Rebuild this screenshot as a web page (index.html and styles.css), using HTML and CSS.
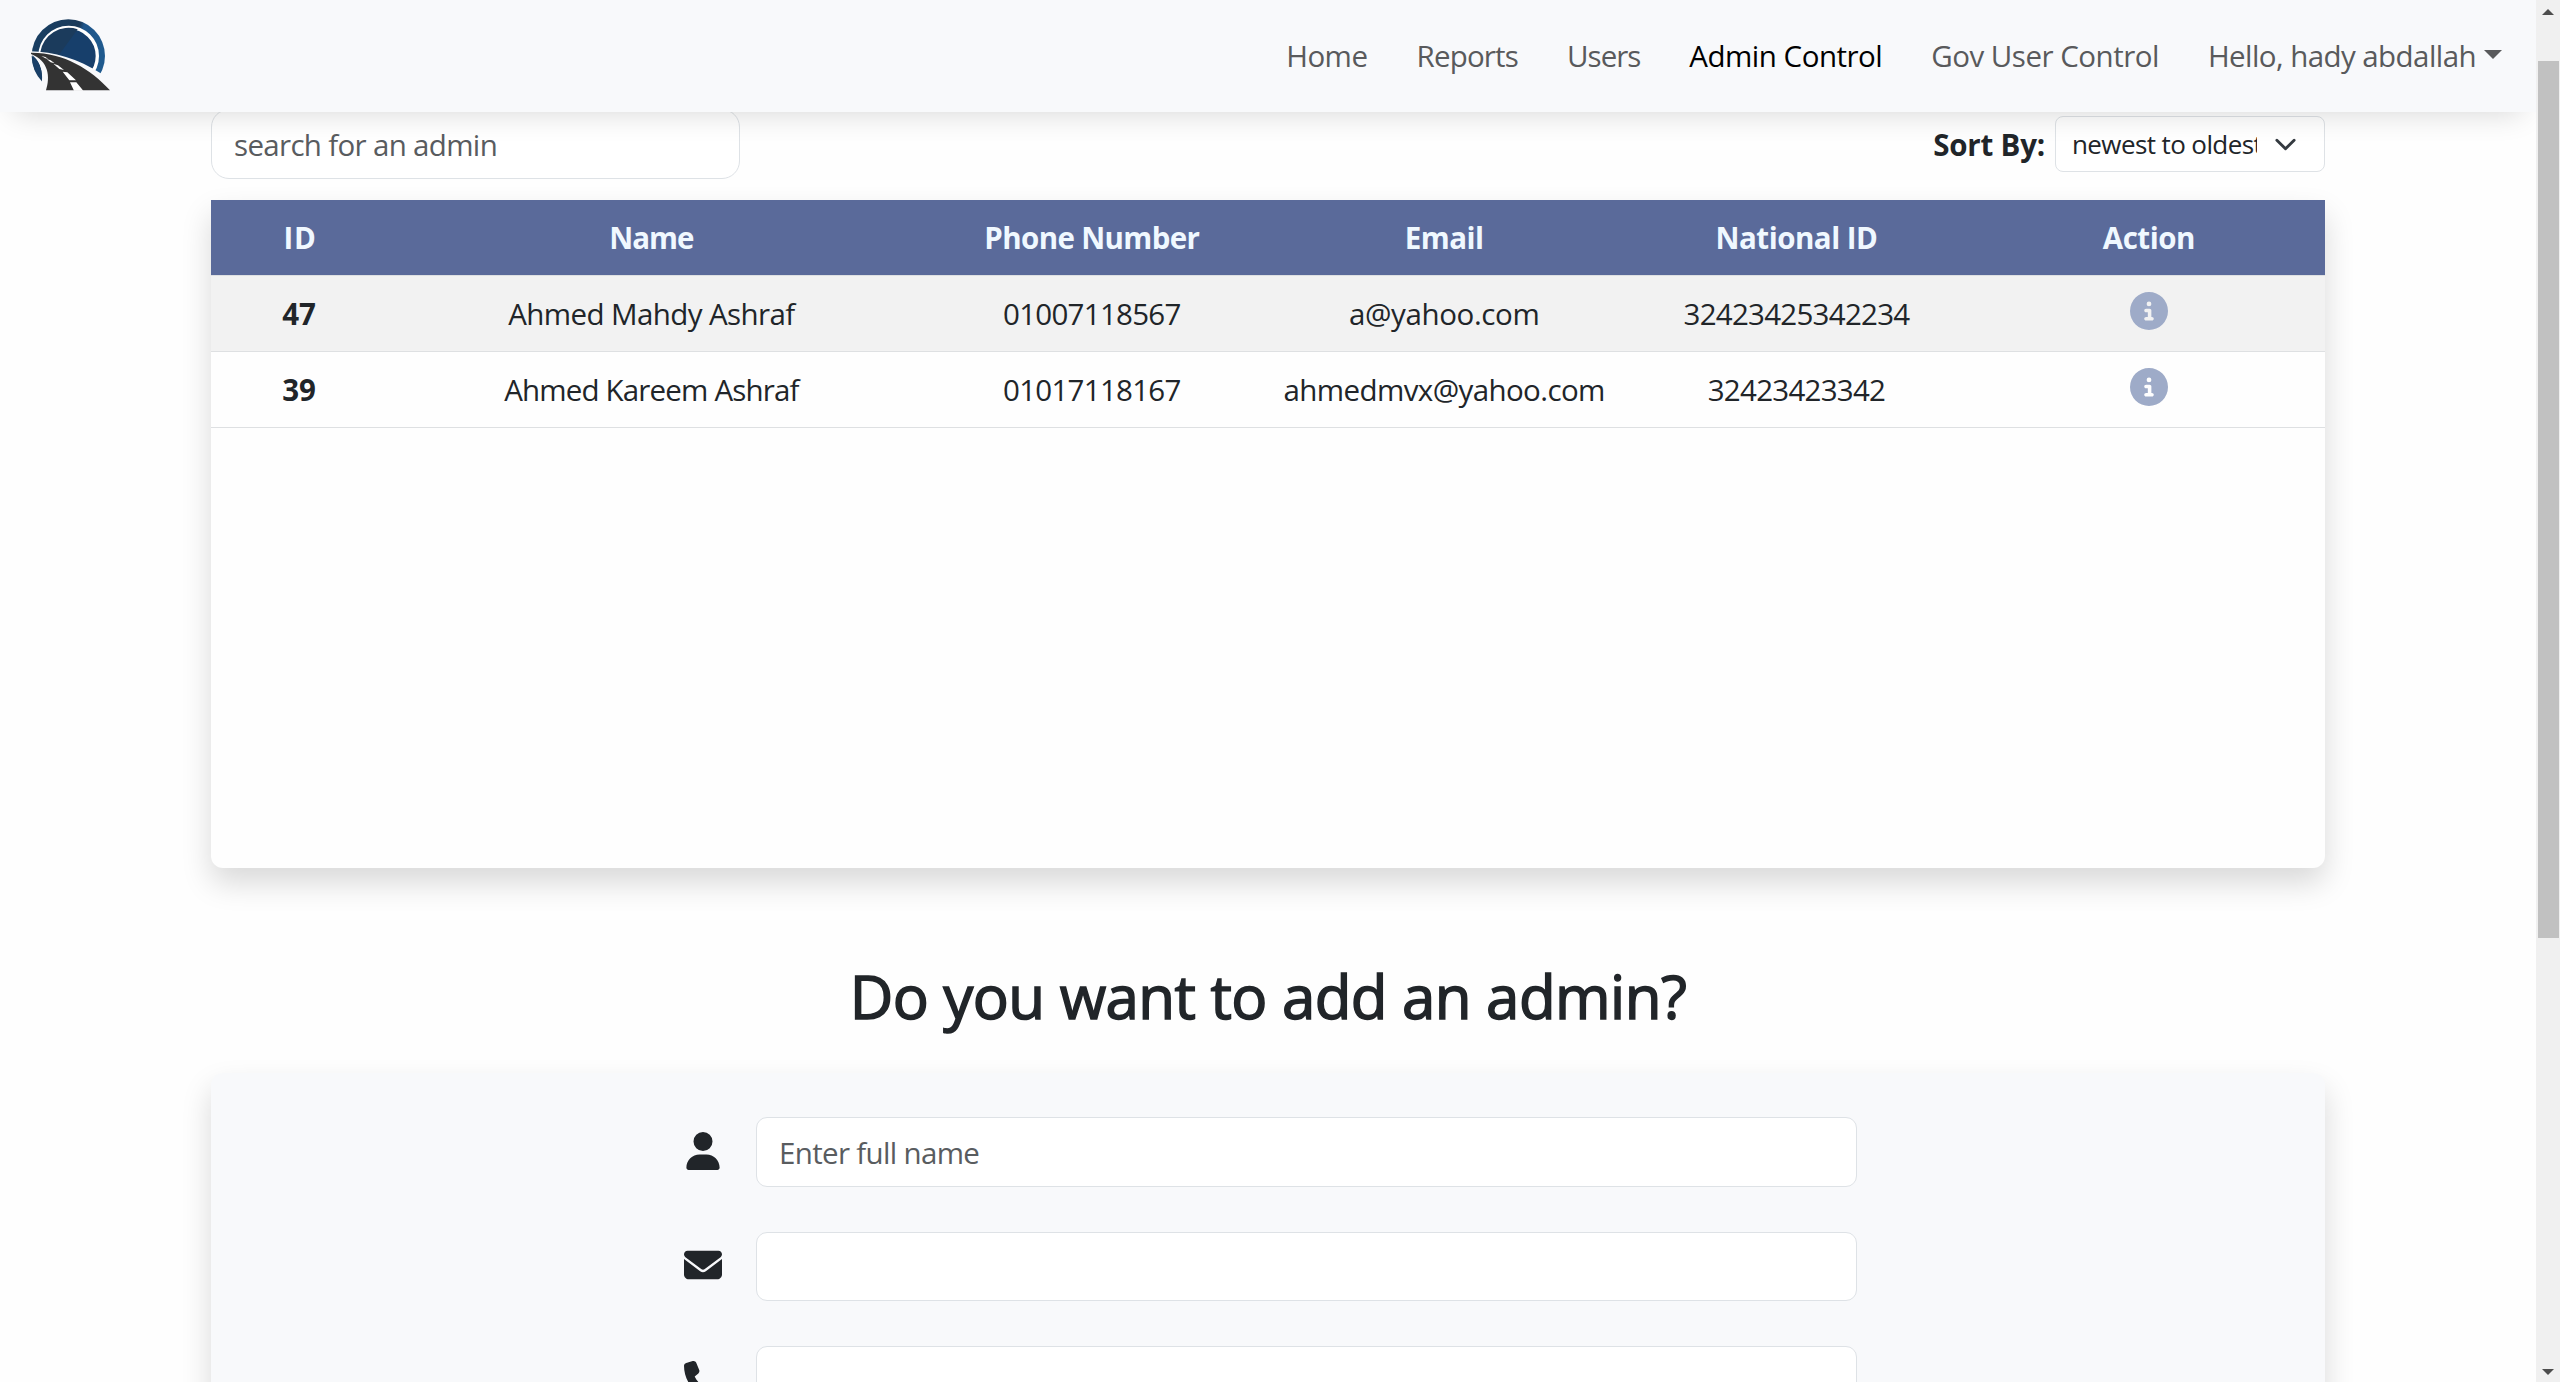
FILE: index.html
```html
<!DOCTYPE html>
<html lang="en">
<head>
<meta charset="utf-8">
<title>Admin Control</title>
<link rel="stylesheet" href="styles.css">
</head>
<body>
<div class="window">
  <div class="page">
    <header class="navbar">
      <a class="brand" href="#" aria-label="Home">
        <svg class="logo" viewBox="90 50 246 225">
          <defs>
            <linearGradient id="rim" x1="0" y1="0" x2="1" y2="0.3">
              <stop offset="0" stop-color="#183f63"/><stop offset="0.62" stop-color="#1a3a5a"/>
              <stop offset="0.68" stop-color="#1f568b"/><stop offset="1" stop-color="#1f5a8e"/>
            </linearGradient>
          </defs>
          <circle cx="205" cy="167" r="110" fill="url(#rim)"/>
          <circle cx="206" cy="167" r="86" fill="#173f6b" stroke="#fff" stroke-width="10"/>
          <path d="M121 155a86 86 0 0 1 112-68l-63 86-49-18z" fill="#1b3b5c"/>
          <path d="M88 153C160 153 235 176 302 219L345 252V285H126V238C128 205 118 178 88 163z" fill="#f8f9fb"/>
          <path d="M97 165C116 180 127 205 125 237C107 220 96 196 97 165z" fill="#1a4068"/>
          <path d="M93 157C190 156 272 206 330 270H138C151 230 147 182 93 161z" fill="#333333"/>
          <path d="M124 167l12 3 9 6-9-2zM140 176l12 4 12 9-12-3zM160 190l14 5 18 14-14-3zM188 214l14 2 26 24h-20zM210 246h19l21 25h-28z" fill="#fff"/>
        </svg>
      </a>
      <nav class="links">
        <a class="link t-home" href="#">Home</a>
        <a class="link t-reports" href="#">Reports</a>
        <a class="link t-users" href="#">Users</a>
        <a class="link active" href="#">Admin Control</a>
        <a class="link" href="#">Gov User Control</a>
        <a class="link t-hello" href="#">Hello, hady abdallah<span class="caret"></span></a>
      </nav>
    </header>

    <main class="content">
      <div class="toolbar">
        <input class="field search" type="text" placeholder="search for an admin">
        <div class="sort">
          <span class="sort-label">Sort By:</span>
          <div class="select">
            <span class="select-value">newest to oldest</span>
            <svg class="chevron" viewBox="0 0 16 16"><path d="m2 5 6 6 6-6" fill="none" stroke="#343a40" stroke-width="2" stroke-linecap="round" stroke-linejoin="round"/></svg>
          </div>
        </div>
      </div>

      <section class="card table">
        <div class="row head">
          <span class="t-id">ID</span><span class="t-name">Name</span><span class="t-phone">Phone Number</span><span>Email</span><span>National ID</span><span>Action</span>
        </div>
        <div class="row striped">
          <b>47</b><span class="t-full">Ahmed Mahdy Ashraf</span><span class="t-num">01007118567</span><span class="t-mail">a@yahoo.com</span><span class="t-num">32423425342234</span>
          <span class="action"><svg class="info" viewBox="0 0 512 512"><path d="M256 512A256 256 0 1 0 256 0a256 256 0 1 0 0 512zM216 336h24V272H216c-13.300 0-24-10.700-24-24s10.700-24 24-24h48c13.300 0 24 10.700 24 24v88h8c13.300 0 24 10.700 24 24s-10.700 24-24 24H216c-13.300 0-24-10.700-24-24s10.700-24 24-24zm40-208a32 32 0 1 1 0 64 32 32 0 1 1 0-64z"/></svg></span>
        </div>
        <div class="row">
          <b>39</b><span class="t-full2">Ahmed Kareem Ashraf</span><span class="t-num">01017118167</span><span class="t-full">ahmedmvx@yahoo.com</span><span class="t-num">32423423342</span>
          <span class="action"><svg class="info" viewBox="0 0 512 512"><path d="M256 512A256 256 0 1 0 256 0a256 256 0 1 0 0 512zM216 336h24V272H216c-13.300 0-24-10.700-24-24s10.700-24 24-24h48c13.300 0 24 10.700 24 24v88h8c13.300 0 24 10.700 24 24s-10.700 24-24 24H216c-13.300 0-24-10.700-24-24s10.700-24 24-24zm40-208a32 32 0 1 1 0 64 32 32 0 1 1 0-64z"/></svg></span>
        </div>
      </section>

      <h1 class="title">Do you want to add an admin?</h1>

      <form class="card form">
        <div class="form-row">
          <svg class="form-icon person" viewBox="0 0 448 512"><path d="M224 256A128 128 0 1 0 224 0a128 128 0 1 0 0 256zm-45.700 48C79.800 304 0 383.800 0 482.300C0 498.700 13.300 512 29.700 512H418.300c16.400 0 29.700-13.300 29.700-29.700C448 383.800 368.200 304 269.700 304H178.300z"/></svg>
          <input class="field" type="text" placeholder="Enter full name">
        </div>
        <div class="form-row short">
          <svg class="form-icon" viewBox="0 0 512 512"><path d="M48 64C21.500 64 0 85.500 0 112c0 15.100 7.100 29.300 19.200 38.400L236.800 313.600c11.400 8.500 27 8.500 38.400 0L492.800 150.400c12.100-9.100 19.200-23.300 19.200-38.400c0-26.500-21.500-48-48-48H48zM0 176V384c0 35.300 28.700 64 64 64H448c35.300 0 64-28.700 64-64V176L294.400 339.200c-22.800 17.100-54 17.100-76.800 0L0 176z"/></svg>
          <input class="field" type="text">
        </div>
        <div class="form-row">
          <svg class="form-icon" viewBox="0 0 512 512"><path d="M164.900 24.600c-7.700-18.600-28-28.500-47.400-23.200l-88 24C12.100 30.200 0 46 0 64C0 311.400 200.600 512 448 512c18 0 33.800-12.100 38.600-29.500l24-88c5.300-19.400-4.600-39.700-23.200-47.400l-96-40c-16.300-6.800-35.200-2.100-46.300 11.600L304.700 368C234.300 334.700 177.300 277.700 144 207.300L193.300 167c13.700-11.200 18.400-30 11.600-46.300l-40-96z"/></svg>
          <input class="field" type="text">
        </div>
      </form>
    </main>
  </div>
  <div class="scrollbar">
    <svg class="arrow" viewBox="0 0 12 6"><path d="M6 0l6 6H0z"/></svg>
    <div class="track"><div class="thumb"></div></div>
    <svg class="arrow" viewBox="0 0 12 6"><path d="M0 0h12L6 6z"/></svg>
  </div>
</div>
</body>
</html>
```
FILE: styles.css
```css
* { box-sizing: border-box; }

body {
  margin: 0;
  background: #fefefe;
  color: #212529;
  font: 400 29.5px/45px "Open Sans", "Noto Sans", sans-serif;
}

.window {
  display: grid;
  grid-template-columns: 1fr 24px;
  height: 1382px;
  overflow: hidden;
}

.page {
  height: 1382px;
  overflow: hidden;
}

/* Navigation */
.navbar {
  position: relative;
  z-index: 2;
  display: flex;
  align-items: center;
  justify-content: space-between;
  height: 112px;
  padding: 0 34px 2px 30px;
  background: #f8f9fb;
  box-shadow: 0 15px 30px -14px rgba(0, 0, 0, 0.16);
}

.brand { display: flex; padding-bottom: 1px; }
.logo { width: 82px; height: 75px; }

.links {
  display: flex;
  gap: 49px;
}

.link {
  color: #595a5c;
  text-decoration: none;
  letter-spacing: -0.5px;
  white-space: nowrap;
}

.link.active { color: #000; }
.t-reports { letter-spacing: -0.8px; }
.t-users { letter-spacing: -1px; }
.t-hello { letter-spacing: -0.57px; }

.caret {
  display: inline-block;
  margin-left: 8px;
  vertical-align: 8px;
  border: 9px solid transparent;
  border-top-color: #595a5c;
  border-bottom: 0;
}

/* Content */
.content {
  width: 2114px;
  margin: -3px 0 0 211px;
}

.toolbar {
  display: flex;
  justify-content: space-between;
  height: 91px;
}

.field {
  flex: 1;
  height: 100%;
  padding: 0 22px;
  border: 1px solid #dee2e6;
  border-radius: 11px;
  background: #fff;
  color: #212529;
  font: inherit;
  letter-spacing: -0.67px;
  outline: none;
}

.field::placeholder { color: #595c5f; opacity: 1; }

.search {
  flex: none;
  width: 529px;
  height: 70px;
  border-radius: 18px;
}

.sort {
  display: flex;
  align-items: center;
  gap: 10px;
  height: 70px;
}

.sort-label { font-weight: 700; letter-spacing: -0.2px; }

.select {
  display: flex;
  align-items: center;
  justify-content: space-between;
  width: 270px;
  height: 56px;
  padding: 0 27px 0 16px;
  border: 1px solid #dee2e6;
  border-radius: 8px;
  background: #fff;
  font-size: 26px;
  letter-spacing: -0.6px;
}

.select-value {
  width: 185px;
  overflow: hidden;
  white-space: nowrap;
}

.chevron { width: 23px; height: 23px; }

.card {
  border-radius: 12px;
  box-shadow: 0 15px 30px rgba(0, 0, 0, 0.15);
}

/* Table */
.table {
  height: 668px;
  border-radius: 0 0 12px 12px;
  background: #fefefe;
}

.row {
  display: grid;
  grid-template-columns: 1fr 3fr 2fr 2fr 2fr 2fr;
  align-items: center;
  height: 76px;
  border-bottom: 1px solid #dee0e2;
  text-align: center;
}

.head {
  background: #5a6a9a;
  background-clip: padding-box;
  color: #f0f8ff;
  font-weight: 700;
  letter-spacing: -0.5px;
}

.striped { background: #f2f2f2; }
.t-id { padding-left: 2px; letter-spacing: 0.8px; }
.t-name { letter-spacing: -1px; }
.t-phone { letter-spacing: -0.63px; }
.t-full { letter-spacing: -0.6px; }
.t-full2 { letter-spacing: -0.82px; }
.t-num { letter-spacing: -0.73px; }
.t-mail { letter-spacing: -0.38px; }

.action { display: flex; justify-content: center; }

.info {
  width: 38px;
  height: 38px;
  margin-bottom: 6px;
  fill: #9eabc8;
}

/* Add admin */
.title {
  margin: 92px 0 41px;
  font-size: 60px;
  font-weight: 400;
  line-height: 72px;
  letter-spacing: -0.55px;
  text-align: center;
  -webkit-text-stroke: 1.5px #212529;
}

.form {
  display: flex;
  flex-direction: column;
  gap: 45px;
  height: 800px;
  padding: 44px 468px 0 439px;
  background: #f8f9fb;
}

.form-row {
  display: flex;
  align-items: center;
  height: 70px;
}

.form-row.short { height: 69px; }

.form-icon {
  width: 38px;
  height: 38px;
  margin: 0 34px 3px;
  fill: #212529;
}

/* Scrollbar */
.scrollbar {
  display: flex;
  flex-direction: column;
  align-items: center;
  padding: 9px 0 7px;
  background: #f0f0f0;
}

.arrow { width: 12px; height: 6px; fill: #4d4d4d; }
.track { flex: 1; padding-top: 46px; }
.thumb { width: 21px; height: 877px; background: #c1c1c1; }
```
